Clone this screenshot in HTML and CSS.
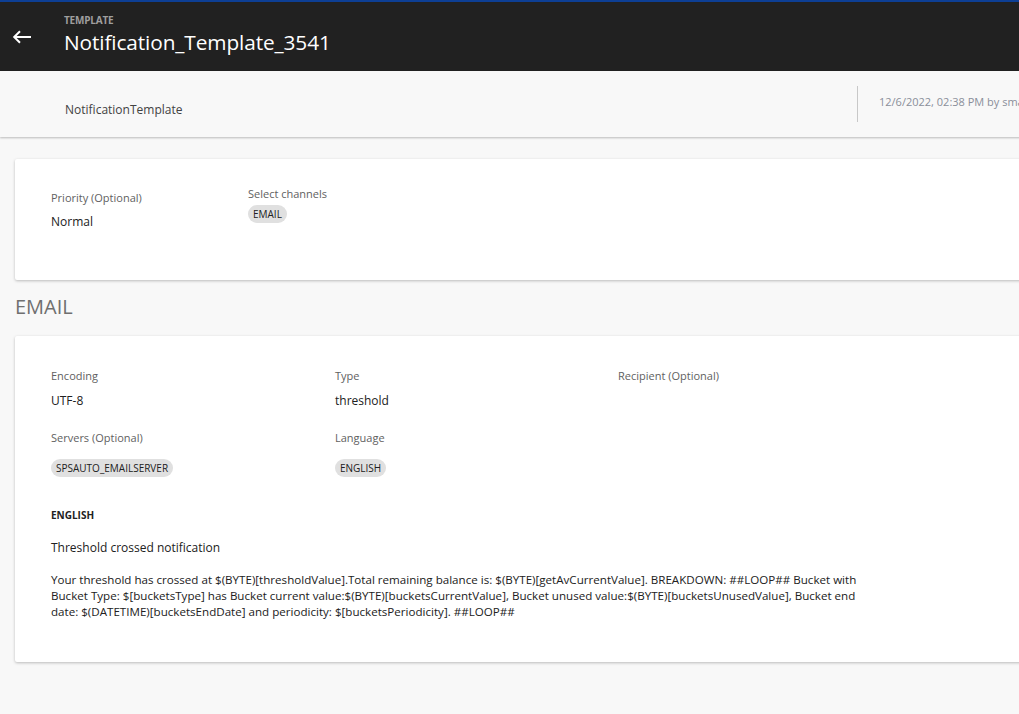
FILE: index.html
```html
<!DOCTYPE html>
<html>
<head>
<meta charset="utf-8">
<link rel="stylesheet" href="styles.css">
</head>
<body>
<div class="page">
  <header class="topbar">
    <button class="back" aria-label="Back">
      <svg width="20" height="14" viewBox="0 0 20 14"><path d="M19 7H2.5M8 1.2L2.2 7L8 12.8" fill="none" stroke="#ffffff" stroke-width="2"/></svg>
    </button>
    <div class="titles">
      <div class="eyebrow">TEMPLATE</div>
      <h1 class="title">Notification_Template_3541</h1>
    </div>
  </header>
  <section class="subbar">
    <div class="subbar-name">NotificationTemplate</div>
    <div class="subbar-meta">12/6/2022, 02:38 PM by smadmin</div>
  </section>
  <main class="content">
    <div class="card card-top">
      <div class="field field-priority">
        <div class="label">Priority (Optional)</div>
        <div class="value">Normal</div>
      </div>
      <div class="field field-channels">
        <div class="label">Select channels</div>
        <span class="chip">EMAIL</span>
      </div>
    </div>
    <h2 class="section-title">EMAIL</h2>
    <div class="card card-email">
      <div class="grid">
        <div class="field">
          <div class="label">Encoding</div>
          <div class="value">UTF-8</div>
        </div>
        <div class="field">
          <div class="label">Type</div>
          <div class="value">threshold</div>
        </div>
        <div class="field">
          <div class="label">Recipient (Optional)</div>
        </div>
        <div class="field">
          <div class="label">Servers (Optional)</div>
          <span class="chip">SPSAUTO_EMAILSERVER</span>
        </div>
        <div class="field">
          <div class="label">Language</div>
          <span class="chip">ENGLISH</span>
        </div>
      </div>
      <div class="lang-block">
        <div class="lang-title">ENGLISH</div>
        <div class="subject">Threshold crossed notification</div>
        <p class="body-text">Your threshold has crossed at $(BYTE)[thresholdValue].Total remaining balance is: $(BYTE)[getAvCurrentValue]. BREAKDOWN: ##LOOP## Bucket with Bucket Type: $[bucketsType] has Bucket current value:$(BYTE)[bucketsCurrentValue], Bucket unused value:$(BYTE)[bucketsUnusedValue], Bucket end date: $(DATETIME)[bucketsEndDate] and periodicity: $[bucketsPeriodicity]. ##LOOP##</p>
      </div>
    </div>
  </main>
</div>
</body>
</html>
```

FILE: styles.css
```css
html, body {
  margin: 0;
  padding: 0;
  overflow: hidden;
  background: #f8f8f8;
  font-family: "Open Sans", "Noto Sans", sans-serif;
  color: #212121;
}

.page {
  width: 1200px;
  min-height: 714px;
  background: #f8f8f8;
}

.topbar {
  display: flex;
  align-items: center;
  height: 69px;
  background: #212121;
  border-top: 2px solid #0d3f95;
}

.back {
  width: 44px;
  height: 44px;
  margin-right: 20px;
  padding: 0 0 0 12px;
  background: none;
  border: 0;
  display: flex;
  align-items: center;
  justify-content: flex-start;
}

.titles {
  display: flex;
  flex-direction: column;
  margin-top: -4px;
}

.eyebrow {
  font-size: 10px;
  font-weight: 700;
  color: #9e9e9e;
  letter-spacing: -0.2px;
  line-height: 14px;
}

.title {
  margin: 0;
  font-size: 20.8px;
  font-weight: 400;
  color: #ffffff;
  line-height: 30px;
  letter-spacing: -0.1px;
}

.subbar {
  display: flex;
  align-items: center;
  height: 66px;
  background: #f8f8f8;
  box-shadow: 0 1px 2px rgba(0,0,0,0.25);
  position: relative;
}

.subbar-name {
  width: 792px;
  padding-left: 65px;
  padding-top: 10px;
  font-size: 12px;
  color: #424242;
}

.subbar-meta {
  height: 36px;
  display: flex;
  align-items: center;
  border-left: 1px solid #c8c8c8;
  padding-left: 21px;
  padding-bottom: 6px;
  box-sizing: border-box;
  font-size: 11px;
  color: #8a8f9a;
}

.content {
  padding: 22px 0 0 15px;
}

.card {
  background: #ffffff;
  box-shadow: 0 1px 3px rgba(0,0,0,0.25);
  border-radius: 2px;
}

.card-top {
  display: flex;
  height: 121px;
  box-sizing: border-box;
  padding: 27px 36px 0;
}

.field-priority {
  width: 197px;
  padding-top: 4px;
}

.field-priority .value {
  margin-top: 8px;
}

.label {
  font-size: 11px;
  color: #616161;
  line-height: 15px;
}

.value {
  font-size: 12px;
  color: #212121;
  line-height: 18px;
}

.chip {
  display: inline-block;
  background: #e0e0e0;
  border-radius: 10px;
  font-size: 10px;
  line-height: 18px;
  padding: 0 5px;
  color: #212121;
}

.field-channels .chip {
  margin-top: -1px;
}

.section-title {
  margin: 0;
  padding: 15px 0 17px;
  font-size: 20px;
  font-weight: 400;
  color: #6f6f6f;
  line-height: 24px;
}

.card-email {
  padding: 32px 36px 42px;
  box-sizing: border-box;
}

.grid {
  display: grid;
  grid-template-columns: 284px 283px 284px;
  row-gap: 20px;
}

.grid .field .value {
  margin-top: 9px;
}

.grid .field .chip {
  margin-top: 14px;
}

.lang-block {
  margin-top: 30px;
}

.lang-title {
  font-size: 10px;
  font-weight: 700;
  color: #212121;
  line-height: 16px;
}

.subject {
  margin-top: 17px;
  font-size: 12px;
  line-height: 16px;
  color: #212121;
}

.body-text {
  margin: 16px 0 0;
  width: 830px;
  font-size: 11.6px;
  line-height: 16px;
  color: #212121;
}
```
